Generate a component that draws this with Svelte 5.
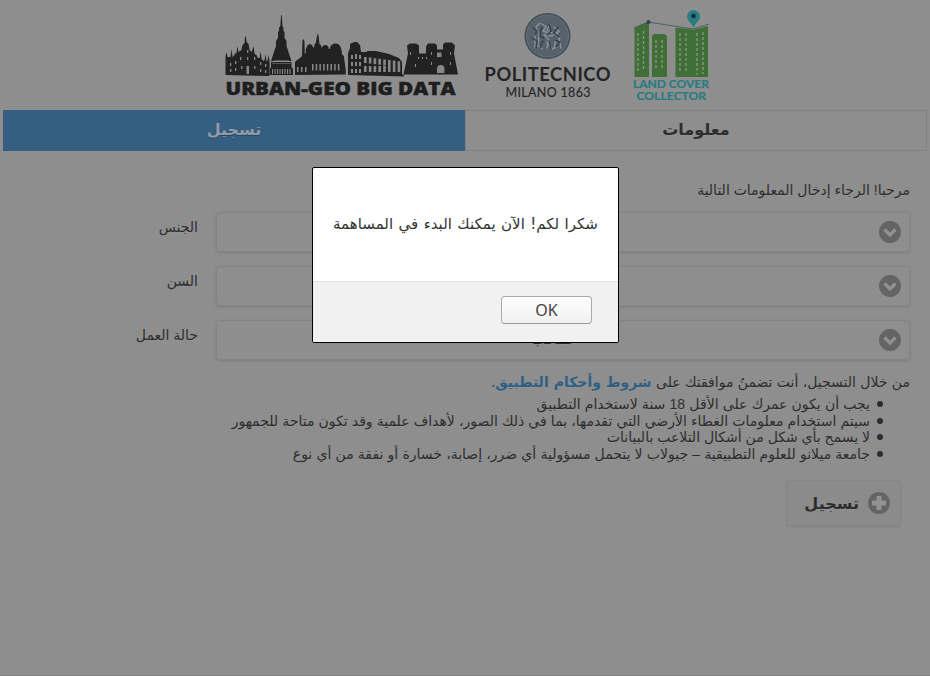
<script>
  const fields = [
    { label: 'الجنس', value: '' },
    { label: 'السن', value: '' },
    { label: 'حالة العمل', value: 'طالب' }
  ];
  const terms = [
    { text: 'يجب أن يكون عمرك على الأقل 18 سنة لاستخدام التطبيق', gap: 0.33 },
    { text: 'سيتم استخدام معلومات الغطاء الأرضي التي تقدمها، بما في ذلك الصور، لأهداف علمية وقد تكون متاحة للجمهور', gap: 0.25 },
    { text: 'لا يسمح بأي شكل من أشكال التلاعب بالبيانات', gap: 0 },
    { text: 'جامعة ميلانو للعلوم التطبيقية – جيولاب لا يتحمل مسؤولية أي ضرر، إصابة، خسارة أو نفقة من أي نوع', gap: 0.3 }
  ];
  const cathedralWindows = [[230, 63], [235, 61], [240, 57], [247, 50], [247, 57], [254, 57], [260, 62], [265, 64], [230, 69], [235, 68], [241, 66], [254, 66], [260, 69], [265, 70]];
  const arches = [0, 1, 2, 3, 4, 5, 6, 7];
</script>

<div class="page">
  <header>
    <svg class="urban" width="240" height="92" viewBox="220 10 240 92">
      <g fill="#222">
        <path d="M225.500 75V57l1-5 1 5h3l1-8 1 8 2-2V54l2-1 1-7 1 6 3-2 1-5 2-2 .5-6 .8-1 .8 6 2 2 1 6 2 2 2-6 1 8 2 1 1 3h2l1-7 1 8 2 2 1-1 1-6 1 8 1-2 1-5 1 7v14z"/>
        <path d="M280.300 26l.8-11h.6l.8 11 1 2v3l1 1v6l2 3v5l3 9 2 6h-20.500l2-6 3-9v-5l2-3v-6l1-1v-3zM271 62h20.500v5l1.500 2v6h-23v-6l1-2z"/>
        <path d="M295 75V62l2-2 3-2 2-2 .4-15 1-2 1 2 .4 13 1-1v-4l2-4 2-1 2 1 2 3 1-4 1-1 1-6 1-4 1 4 .6 7 1.400 1 1 3c1-4 7-4 7 1h1c1-7 10-7 11-1 1 2 1 4 1 6l2 2 2 15v3.500z"/>
        <path d="M348 75V53l2-5v-4l4-2h3l3 3 1 7h6v-1h9l13 3 10 4 3 4v12l2 1v1.500z"/>
        <path d="M403.500 74.500l4.500-21-1-8 3-2h6l3 2v8h7v-7l2-3h7l2 2v4h6v-5l2-2h7l3 3-1 8 4 21z"/>
      </g>
      <g fill="#878787">
        {#each cathedralWindows as [x, y]}<rect {x} {y} width="1.300" height="3" />{/each}
        <rect x="246.500" y="66" width="2.500" height="8" />
        {#each arches as i}
          <rect x={272 + i * 2.500} y="69" width="1.100" height="5" />
          <rect x={312 + i * 3.700} y="64" width="1.500" height="6.500" />
          <path d={`M${364 + i * 4.800} ${57 + i * .6}h2.600v6h-2.600zM${364 + i * 4.800} 66h2.600v6h-2.600z`} />
        {/each}
        <path d="M272 63.500h19v.5h-19zM274 60h15v.5h-15zM297 67h1.500v5H297zm4 0h1.500v5H301zm4 0h1.500v5H305zM351 55h2v4h-2zm4-1h2v5h-2zm4 1h2v4h-2zM351 62h2v4h-2zm4 0h2v4h-2zm4 0h2v4h-2zM351 69h2v4h-2zm4 0h2v4h-2zm4 0h2v4h-2zM437 52.500h4.500V57H437zM437 73v-4q0-4 3.700-4t3.700 4v4zM418 57h1v2h-1zm4 0h1v2h-1zm4 0h1v2h-1zM410 52h1v3h-1zM431 52h1v3h-1zm0 10h1v3h-1zM450 52h1v3h-1zm0 10h1v3h-1zM415 64h1v3h-1z"/>
      </g>
      <text x="225.500" y="95" textLength="230" lengthAdjust="spacingAndGlyphs" class="urban-text">URBAN-GEO BIG DATA</text>
    </svg>
    <svg class="poli" width="130" height="92" viewBox="482 10 130 92">
      <circle cx="547.500" cy="36" r="23" fill="#404d56"/>
      <circle cx="547.500" cy="36" r="21" fill="#56626a" stroke="#6c7880" stroke-width=".8"/>
      <g fill="none" stroke-linecap="round" stroke-width="1.400">
        <path stroke="#89949b" d="M540 23l-4 4 2 5m4-8l4 3-3 4 5 2m2-8l-3 5 5 3m2-6l5 4-3 4 4 3M535 35v13m4-14l-1 12 4 3m2-14l5 5-2 8m-2-13l7 1 5-4m-1 8l-2 8m5-10l2 10M547 42l5 7 5-2"/>
        <path stroke="#35424b" d="M533 28l4 3-2 4m7-8l-2 9 4 2m5-14l2 7-4 4m11-8l-4 6 5 4M532 38l5 3-1 7m7-7l-3 7m9-7l2 8m4-9l5 2-4 5"/>
      </g>
      <text x="484.500" y="80.800" textLength="126" class="poli-name">POLITECNICO</text>
      <text x="505.500" y="97" textLength="85" class="poli-city">MILANO 1863</text>
    </svg>
    <svg class="cover" width="82" height="94" viewBox="630 8 82 94">
      <g fill="#3f6f37">
        <path d="M634.500 28l13-6 1.500 3v52h-14.500zM652 36l2-2h10.500l2.500 2v41h-15zM675.500 27.500l16.500 2V77h-16.500zM692 30l16-4V77h-16z"/>
      </g>
      <g stroke="#8c988a" fill="none" stroke-width="1.300">
        <path stroke-dasharray="3 2" d="M638 33v38M643.500 31v40M656 40v28M662 40v28M680 33v38M686 33v38M697 33v42M703 32v42"/>
      </g>
      <path d="M634 28l14-6 45 7 16-5" fill="none" stroke="#3c5550" stroke-width=".8"/>
      <circle cx="648.500" cy="22" r="2" fill="#214652"/>
      <path d="M693.500 28c-1.500-5-6.500-7-6.500-11.500a6.500 6.500 0 0 1 13 0c0 4.500-5 6.500-6.500 11.500z" fill="#287c83"/>
      <circle cx="693.500" cy="16" r="2.300" fill="#142c3a"/>
      <text x="633" y="87.500" textLength="76" lengthAdjust="spacingAndGlyphs" class="cover-text">LAND COVER</text>
      <text x="636.500" y="99.500" textLength="69.500" lengthAdjust="spacingAndGlyphs" class="cover-text">COLLECTOR</text>
    </svg>
  </header>

  <nav>
    <div class="tab">معلومات</div>
    <div class="tab active">تسجيل</div>
  </nav>

  <main>
    <p class="intro">مرحبا! الرجاء إدخال المعلومات التالية</p>
    {#each fields as field}
      <div class="field">
        <div class="select">
          <svg class="icon" width="22" height="22" viewBox="0 0 22 22"><circle cx="11" cy="11" r="11" fill="#646464"/><path d="M5.500 8.500l5.500 5.500 5.500-5.500" fill="none" stroke="#929292" stroke-width="3.200"/></svg>
          <span>{field.value}</span>
        </div>
        <div class="label">{field.label}</div>
      </div>
    {/each}
    <p class="consent">من خلال التسجيل، أنت تضمنُ موافقتك على <b>شروط وأحكام التطبيق.</b></p>
    <ul>
      {#each terms as term}<li style:word-spacing="{term.gap}px">{term.text}</li>{/each}
    </ul>
    <div class="submit">
      <svg width="22" height="22" viewBox="0 0 22 22"><circle cx="11" cy="11" r="11" fill="#646464"/><path d="M11 4v14M4 11h14" stroke="#929292" stroke-width="5"/></svg>
      <span>تسجيل</span>
    </div>
  </main>
  <div class="end"></div>

  <div class="dialog">
    <div class="message">شكرا لكم! الآن يمكنك البدء في المساهمة</div>
    <div class="actions"><button>OK</button></div>
  </div>
</div>

<style>
  :global(body) { margin: 0; background: #8e8e8e; }
  .page {
    position: relative; box-sizing: border-box; width: 930px; height: 676px; overflow: hidden;
    display: flex; flex-direction: column; background: #8e8e8e; color: #2d2d2d; direction: rtl;
    font-family: "Liberation Sans", "DejaVu Sans", sans-serif; font-size: 14px;
    text-shadow: 0 1px 0 #939393;
  }
  header { height: 110px; box-sizing: border-box; padding: 8px 220px 0; display: flex; direction: ltr; }
  header svg { flex: none; text-shadow: none; }
  .urban { margin-top: 2px; }
  .poli { margin: 2px 0 0 22px; }
  .cover { margin-left: 18px; }
  .urban-text { font: 800 18px "Open Sans", sans-serif; fill: #1e1e1e; stroke: #1e1e1e; stroke-width: .5; }
  .poli-name { font: 700 18.300px Lato, sans-serif; fill: #242424; }
  .poli-city { font: 400 12.500px Lato, sans-serif; fill: #252525; stroke: #252525; stroke-width: .15; }
  .cover-text { font: 700 11.500px Lato, sans-serif; fill: #287c83; stroke: #287c83; stroke-width: .2; }
  nav { display: flex; height: 41px; margin: 0 3px; flex: none; }
  .tab { flex: 1; box-sizing: border-box; border: 1px solid #828282; text-align: center; font-size: 16px; font-weight: 700; line-height: 38px; }
  .active { background: #345f82; border-color: #345f82; color: #929ba4; text-shadow: 0 1px 0 #234660; }
  main { padding: 0 20px; display: flex; flex-direction: column; }
  p { margin: 0; line-height: 18px; }
  .intro { margin-top: 30px; height: 31px; }
  .field { display: flex; gap: 18px; height: 40px; margin-bottom: 14px; }
  .select {
    width: 694px; flex: none; box-sizing: border-box; border: 1px solid #848484; border-radius: 4px; box-shadow: 0 1px 3px #7c7c7c;
    display: flex; align-items: center; font-size: 16px; font-weight: 700; padding-right: 8px;
  }
  .select span { flex: 1; text-align: center; padding-left: 8px; padding-bottom: 4px; }
  .label { flex: 1; padding-top: 6px; line-height: 18px; text-align: right; }
  .consent { margin-top: -1px; height: 23px; word-spacing: .45px; }
  b { color: #2f6084; word-spacing: 1.100px; }
  ul { margin: 0; padding: 0 27px 0 0; line-height: 16.600px; list-style: none; }
  li { display: flex; align-items: center; gap: 7px; }
  li::before { content: ""; width: 6px; height: 6px; border-radius: 50%; background: #2d2d2d; }
  .submit {
    align-self: flex-start; box-sizing: border-box; width: 115px; height: 46px; margin: 18px 9px 0 0; padding: 0 10px;
    border: 1px solid #868686; background: #8b8b8b; border-radius: 4px; box-shadow: 0 1px 2px #828282;
    display: flex; align-items: center; gap: 9px; font-size: 16px; font-weight: 700;
  }
  .end { margin-top: auto; border-bottom: 1px solid #808080; }
  .dialog {
    position: absolute; left: 312px; top: 167px; width: 307px; height: 176px; box-sizing: border-box;
    display: flex; flex-direction: column; border: 1px solid #000; border-radius: 2px; background: #fff; overflow: hidden;
    color: #333; text-shadow: none;
  }
  .message { height: 113px; line-height: 113px; text-align: center; font-family: "DejaVu Sans", sans-serif; font-size: 15px; word-spacing: .7px; }
  .actions { flex: 1; background: #f1f1f1; border-top: 1px solid #ddd; display: flex; justify-content: flex-end; direction: ltr; padding: 14px 26px 0 0; }
  button {
    width: 91px; height: 28px; padding: 0; border: 1px solid #aaa; border-bottom-color: #999; border-radius: 4px;
    background: linear-gradient(#fff, #f0f0f0); color: #444; font: 16px/24px "Noto Sans", sans-serif;
  }
</style>
